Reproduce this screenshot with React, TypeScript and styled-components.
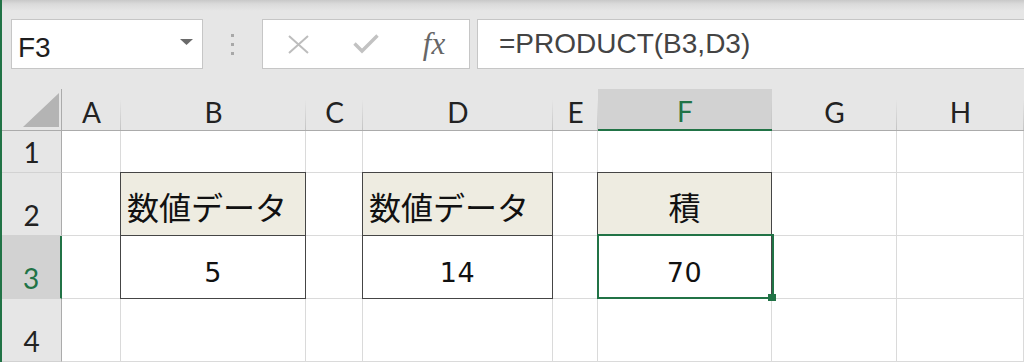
import React from 'react'
import styled, {createGlobalStyle, css} from 'styled-components'

const GREEN = '#217346'
const GRID = '#dadada'

const GlobalStyle = createGlobalStyle`
    html, body {
        margin: 0;
        padding: 0;
        background: #e6e6e6;
    }
    body {
        font-family: "Liberation Sans", "Noto Sans CJK JP", sans-serif;
    }
`

const COLUMNS = ['A', 'B', 'C', 'D', 'E', 'F', 'G', 'H']
const ROWS = [1, 2, 3, 4]

type CellData = {
    text: string
    kind: 'cjk' | 'num'
    align: 'left' | 'center'
    fill?: boolean
}

const DATA: Record<string, CellData> = {
    B2: {text: '数値データ', kind: 'cjk', align: 'left', fill: true},
    D2: {text: '数値データ', kind: 'cjk', align: 'left', fill: true},
    F2: {text: '積', kind: 'cjk', align: 'center', fill: true},
    B3: {text: '5', kind: 'num', align: 'center'},
    D3: {text: '14', kind: 'num', align: 'center'},
    F3: {text: '70', kind: 'num', align: 'center'},
}

const ACTIVE_COL = 'F'
const ACTIVE_ROW = 3

const App = () => {
    return (
        <>
            <GlobalStyle/>
            <Window>
                <Toolbar>
                    <NameBox>
                        <NameText>F3</NameText>
                        <DropArrow width="13" height="6" viewBox="0 0 13 6">
                            <polygon points="0,0 13,0 6.5,6" fill="#6a6a6a"/>
                        </DropArrow>
                    </NameBox>
                    <Grip>
                        <Dot/>
                        <Dot/>
                        <Dot/>
                    </Grip>
                    <ButtonBox>
                        <IconSlot>
                            <svg width="21" height="19" viewBox="0 0 21 19">
                                <path d="M1 1 L20 18 M20 1 L1 18" stroke="#bdbdbd" strokeWidth="2" fill="none"/>
                            </svg>
                        </IconSlot>
                        <IconSlot>
                            <svg width="26" height="20" viewBox="0 0 26 20">
                                <path d="M1.5 9.5 L9 17 L24.5 1.5" stroke="#c2c2c2" strokeWidth="3.4" fill="none"/>
                            </svg>
                        </IconSlot>
                        <IconSlot>
                            <Fx>fx</Fx>
                        </IconSlot>
                    </ButtonBox>
                    <FormulaBox>=PRODUCT(B3,D3)</FormulaBox>
                </Toolbar>
                <Sheet>
                    <Corner>
                        <svg width="36" height="34" viewBox="0 0 36 34">
                            <polygon points="36,0 36,34 0,34" fill="#b4b4b4"/>
                        </svg>
                    </Corner>
                    {COLUMNS.map(c => (
                        <ColHeader key={c} $active={c === ACTIVE_COL}>{c}</ColHeader>
                    ))}
                    {ROWS.map(r => (
                        <React.Fragment key={r}>
                            <RowHeader $active={r === ACTIVE_ROW}>{r}</RowHeader>
                            {COLUMNS.map(c => {
                                const ref = c + r
                                const d = DATA[ref]
                                if (!d) return <Cell key={ref}/>
                                return (
                                    <Cell key={ref} $boxed $fill={d.fill} $align={d.align} $kind={d.kind}>
                                        {d.text}
                                        {ref === 'F3' && (
                                            <>
                                                <Selection/>
                                                <FillHandle/>
                                            </>
                                        )}
                                    </Cell>
                                )
                            })}
                        </React.Fragment>
                    ))}
                </Sheet>
            </Window>
        </>
    )
}

const Window = styled.div`
    width: 1024px;
    height: 362px;
    overflow: hidden;
    box-sizing: border-box;
    border-left: 2px solid ${GREEN};
    background: #e6e6e6;
    display: flex;
    flex-direction: column;
`

const Toolbar = styled.div`
    flex: none;
    height: 89px;
    box-sizing: border-box;
    padding: 19px 0 0 9px;
    display: flex;
    align-items: flex-start;
    background: linear-gradient(to bottom, #c8c8c8 0, #dadada 4px, #e6e6e6 11px);
`

const Box = styled.div`
    height: 50px;
    box-sizing: border-box;
    background: #fff;
    border: 1px solid #c6c6c6;
`

const NameBox = styled(Box)`
    width: 192px;
    flex: none;
    display: flex;
    align-items: flex-start;
    justify-content: space-between;
    padding: 0 9px 0 6px;
`

const NameText = styled.span`
    font-family: "Liberation Sans", sans-serif;
    font-size: 28px;
    line-height: 1;
    color: #1e1e1e;
    margin-top: 14px;
`

const DropArrow = styled.svg`
    margin-top: 19px;
`

const Grip = styled.div`
    width: 59px;
    height: 50px;
    flex: none;
    display: flex;
    flex-direction: column;
    align-items: center;
    justify-content: center;
    gap: 6px;
`

const Dot = styled.div`
    width: 3px;
    height: 3px;
    background: #a8a8a8;
`

const ButtonBox = styled(Box)`
    width: 208px;
    flex: none;
    display: grid;
    grid-template-columns: repeat(3, 68px);
    padding-left: 1px;
    align-items: center;
`

const IconSlot = styled.div`
    display: flex;
    justify-content: center;
    align-items: center;
`

const Fx = styled.span`
    font-family: "Liberation Serif", serif;
    font-style: italic;
    font-size: 31px;
    line-height: 1;
    color: #666;
    margin-top: -2px;
`

const FormulaBox = styled(Box)`
    flex: 1;
    margin-left: 7px;
    border-right: none;
    display: flex;
    align-items: center;
    padding-left: 21px;
    font-family: "Liberation Sans", sans-serif;
    font-size: 28px;
    color: #444;
`

const Sheet = styled.div`
    flex: 1;
    display: grid;
    grid-template-columns: 60px 59px 185px 57px 190px 45px 174px 125px 1fr;
    grid-template-rows: 42px 42px 63px 63px 63px;
    background: #fff;
`

const Corner = styled.div`
    box-sizing: border-box;
    background: #e6e6e6;
    border-right: 1px solid #ababab;
    border-bottom: 1px solid #ababab;
    display: flex;
    justify-content: flex-end;
    align-items: flex-end;
    padding: 0 2px 3px 0;
`

const headerFont = css`
    font-family: Lato, "Liberation Sans", sans-serif;
    font-size: 28px;
    line-height: 1;
`

const ColHeader = styled.div<{ $active?: boolean }>`
    ${headerFont};
    box-sizing: border-box;
    display: flex;
    justify-content: center;
    align-items: center;
    padding-top: 4px;
    color: ${p => p.$active ? GREEN : '#222'};
    background: linear-gradient(to bottom, rgba(200, 200, 200, 0) 25%, #c4c4c4) right / 1px 100% no-repeat,
        ${p => p.$active ? '#d2d2d2' : '#e6e6e6'};
    border-bottom: ${p => p.$active ? `2px solid ${GREEN}` : '1px solid #ababab'};
`

const RowHeader = styled.div<{ $active?: boolean }>`
    ${headerFont};
    box-sizing: border-box;
    display: flex;
    justify-content: center;
    align-items: flex-end;
    padding-bottom: 6px;
    color: ${p => p.$active ? GREEN : '#222'};
    background: ${p => p.$active ? '#d2d2d2' : '#e6e6e6'};
    border-right: ${p => p.$active ? `2px solid ${GREEN}` : '1px solid #ababab'};
    border-bottom: 1px solid #d2d2d2;
`

const Cell = styled.div<{ $boxed?: boolean; $fill?: boolean; $align?: 'left' | 'center'; $kind?: 'cjk' | 'num' }>`
    position: relative;
    box-sizing: border-box;
    display: flex;
    align-items: center;
    justify-content: ${p => p.$align === 'left' ? 'flex-start' : 'center'};
    border-right: 1px solid ${GRID};
    border-bottom: 1px solid ${GRID};
    background: ${p => p.$fill ? '#eeece1' : '#fff'};
    color: #111;
    line-height: 1;
    white-space: nowrap;
    ${p => p.$boxed && css`
        border: 1px solid #454545;
        margin: -1px 0 0 -1px;
        z-index: 1;
    `}
    ${p => p.$kind === 'cjk' && css`
        font-family: "Noto Sans CJK JP", sans-serif;
        font-size: 32px;
        padding: 3px 0 0 ${p.$align === 'left' ? '6px' : '0'};
    `}
    ${p => p.$kind === 'num' && css`
        font-family: "DejaVu Sans", sans-serif;
        font-size: 27px;
        letter-spacing: 0.5px;
        padding-top: 11px;
    `}
`

const Selection = styled.div`
    position: absolute;
    top: -2px;
    left: -1px;
    right: -3px;
    bottom: -1px;
    border: 2px solid ${GREEN};
    z-index: 2;
`

const FillHandle = styled.div`
    position: absolute;
    right: -5px;
    bottom: -3px;
    width: 8px;
    height: 7px;
    background: ${GREEN};
    z-index: 3;
`

export default App
